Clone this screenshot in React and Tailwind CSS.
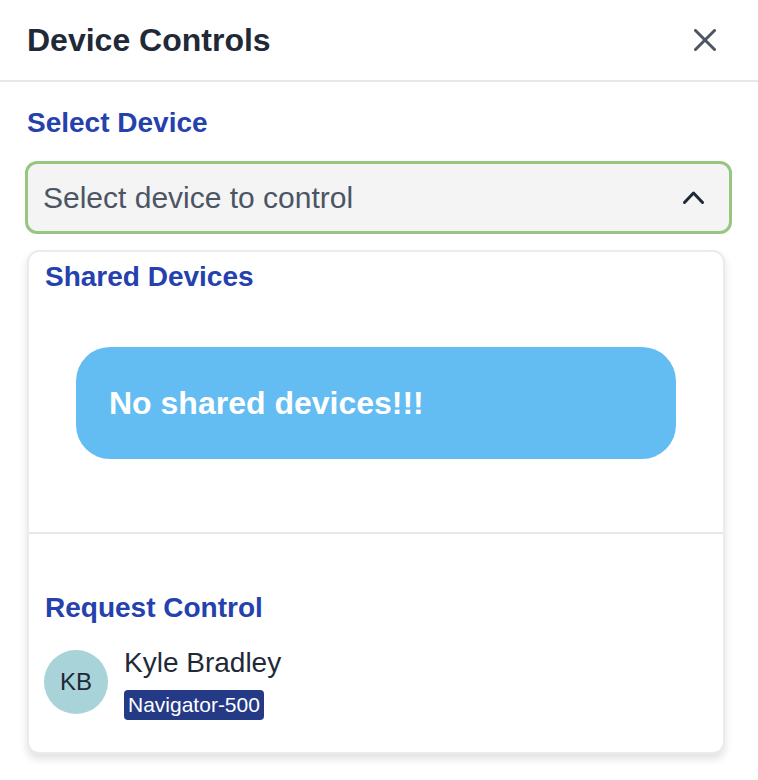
import React from "react";

export default function App() {
  return (
    <div className="w-[758px] h-[780px] bg-white font-['Liberation_Sans',Arial,sans-serif] overflow-hidden">
      {/* Header */}
      <div className="h-[80px] box-content border-b-2 border-[#e5e7eb] flex items-center justify-between pl-[27px] pr-[42px]">
        <h1 className="text-[32px] leading-[38px] font-bold text-[#1f2937]">Device Controls</h1>
        <svg width="22" height="22" viewBox="0 0 22 22" fill="none" stroke="#4b5563" strokeWidth="3" strokeLinecap="round">
          <line x1="1.5" y1="1.5" x2="20.5" y2="20.5" />
          <line x1="20.5" y1="1.5" x2="1.5" y2="20.5" />
        </svg>
      </div>

      {/* Body */}
      <div className="pl-[25px] pr-[26px]">
        <h2 className="mt-[24px] ml-[2px] text-[28px] leading-[34px] font-bold text-[#2441ad]">Select Device</h2>

        <div className="mt-[21px] h-[73px] rounded-[12px] border-[3px] border-[#97c680] bg-[#f4f4f5] flex items-center justify-between pl-[15px] pr-[25px]">
          <span className="text-[30px] leading-[36px] text-[#4b5563]">Select device to control</span>
          <svg width="21" height="13" viewBox="0 0 21 13" fill="none" stroke="#1f2937" strokeWidth="3" strokeLinecap="round" strokeLinejoin="round">
            <polyline points="1.5,11.5 10.5,2 19.5,11.5" />
          </svg>
        </div>

        {/* Dropdown card */}
        <div className="mt-[16px] ml-[2px] w-[698px] rounded-[12px] border-2 border-[#eaebef] bg-white shadow-[0_5px_8px_rgba(0,0,0,0.12)]">
          <div className="px-[16px] pt-[8px] pb-[73px]">
            <h3 className="text-[28px] leading-[34px] font-bold text-[#2441ad]">Shared Devices</h3>
            <div className="mt-[53px] ml-[31px] w-[600px] h-[112px] rounded-[34px] bg-[#63bcf2] flex items-center pl-[33px]">
              <span className="text-[32px] leading-[38px] font-bold text-white">No shared devices!!!</span>
            </div>
          </div>
          <div className="h-[2px] bg-[#e5e7eb]" />
          <div className="px-[16px] pt-[57px] pb-[32px]">
            <h3 className="text-[28px] leading-[34px] font-bold text-[#2441ad]">Request Control</h3>
            <div className="mt-[22px] flex items-start gap-[16px]">
              <div className="mt-[3px] -ml-[1px] w-[64px] h-[64px] rounded-full bg-[#a8d3d9] flex items-center justify-center">
                <span className="text-[24px] leading-[28px] text-[#1f2937]">KB</span>
              </div>
              <div className="flex flex-col items-start">
                <span className="text-[28px] leading-[32px] text-[#1f2937]">Kyle Bradley</span>
                <span className="mt-[11px] px-[4px] py-[4px] rounded-[4px] bg-[#243a86] text-white text-[21px] leading-[22px]">Navigator-500</span>
              </div>
            </div>
          </div>
        </div>
      </div>
    </div>
  );
}
